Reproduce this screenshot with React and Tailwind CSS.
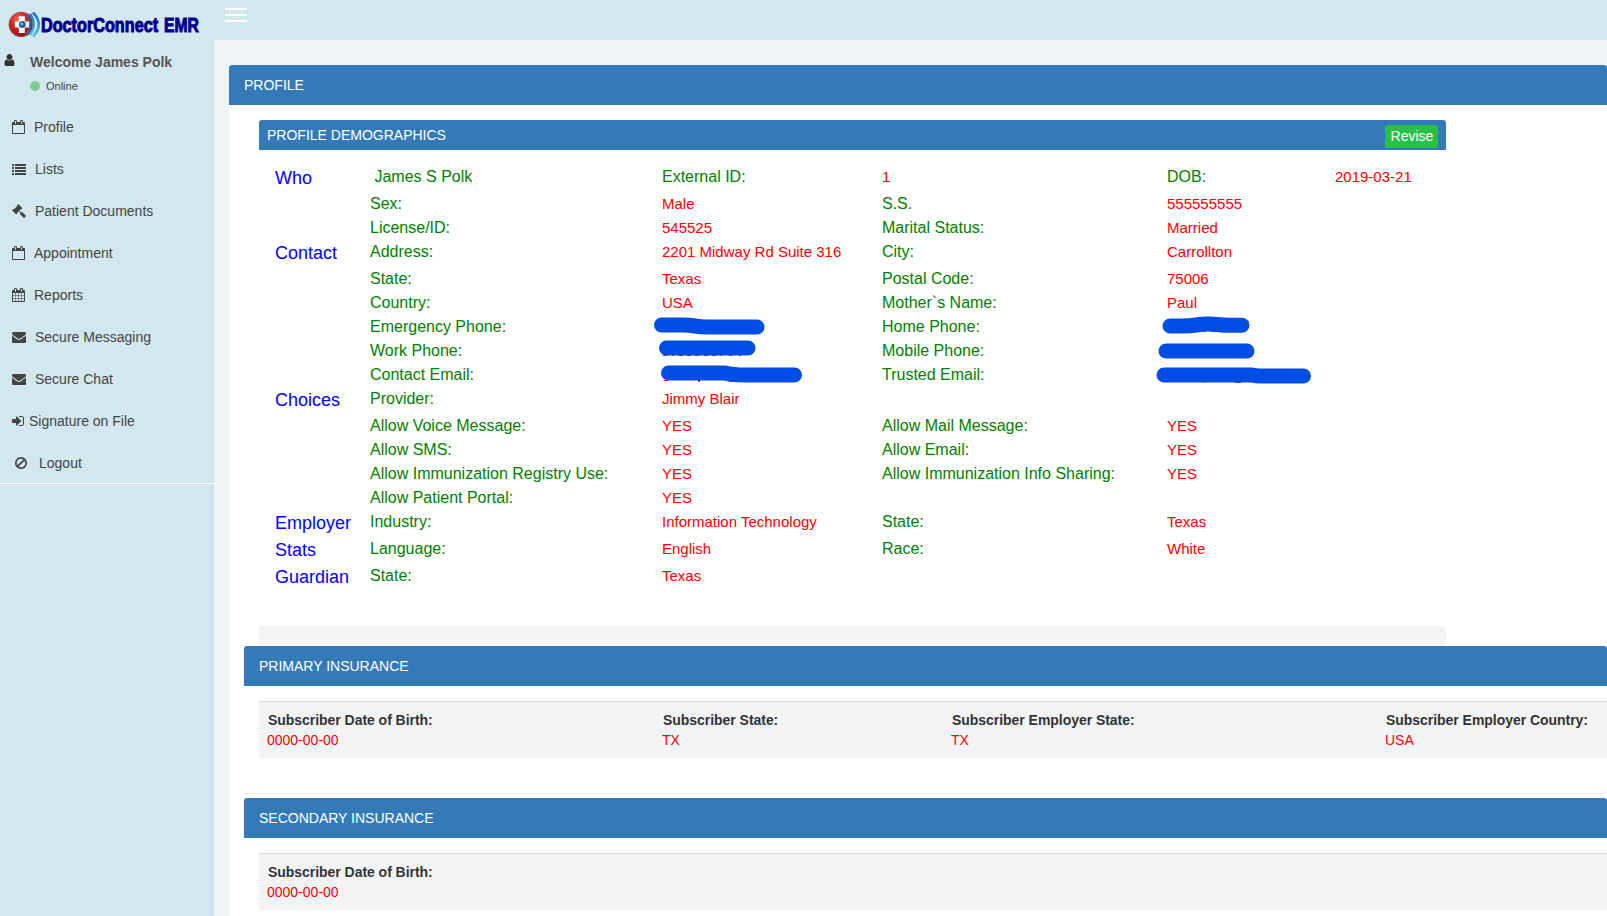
const P = {
  calendarO: "M192 1664h1408v-1024h-1408v1024zm384-1216v-288q0-14-9-23t-23-9h-64q-14 0-23 9t-9 23v288q0 14 9 23t23 9h64q14 0 23-9t9-23zm768 0v-288q0-14-9-23t-23-9h-64q-14 0-23 9t-9 23v288q0 14 9 23t23 9h64q14 0 23-9t9-23zm384-64v1280q0 52-38 90t-90 38h-1408q-52 0-90-38t-38-90v-1280q0-52 38-90t90-38h128v-96q0-66 47-113t113-47h64q66 0 113 47t47 113v96h384v-96q0-66 47-113t113-47h64q66 0 113 47t47 113v96h128q52 0 90 38t38 90z",
  calendar: "M192 1664h288v-288h-288v288zm352 0h320v-288h-320v288zm-352-352h288v-320h-288v320zm352 0h320v-320h-320v320zm-352-384h288v-288h-288v288zm736 736h320v-288h-320v288zm-384-736h320v-288h-320v288zm768 736h288v-288h-288v288zm-384-352h320v-320h-320v320zm-352-864v-288q0-13-9.5-22.5t-22.5-9.5h-64q-13 0-22.5 9.5t-9.5 22.5v288q0 13 9.5 22.5t22.5 9.5h64q13 0 22.5-9.5t9.5-22.5zm736 864h288v-320h-288v320zm-384-384h320v-288h-320v288zm384 0h288v-288h-288v288zm32-480v-288q0-13-9.5-22.5t-22.5-9.5h-64q-13 0-22.5 9.5t-9.5 22.5v288q0 13 9.5 22.5t22.5 9.5h64q13 0 22.5-9.5t9.5-22.5zm384-64v1280q0 52-38 90t-90 38h-1408q-52 0-90-38t-38-90v-1280q0-52 38-90t90-38h128v-96q0-66 47-113t113-47h64q66 0 113 47t47 113v96h384v-96q0-66 47-113t113-47h64q66 0 113 47t47 113v96h128q52 0 90 38t38 90z",
  list: "M0 256h256v256H0zM384 256h1408v256H384zM0 640h256v256H0zM384 640h1408v256H384zM0 1024h256v256H0zM384 1024h1408v256H384zM0 1408h256v256H0zM384 1408h1408v256H384z",
  gavel: "M1771 1536q0 53-37 90l-107 108q-39 37-91 37-53 0-90-37l-363-364q-38-36-38-90 0-53 43-96l-256-256-126 126q-14 14-34 14t-34-14q2 2 12.5 12t12.5 13 10 11.5 10 13.5 6 13.5 5.5 16.5 1.5 18q0 38-28 68-3 3-16.5 18t-19 20.5-18.5 16.5-22 15.5-22 9-26 4.5q-40 0-68-28l-408-408q-28-28-28-68 0-13 4.5-26t9-22 15.5-22 16.5-18.5 20.5-19 18-16.5q30-28 68-28 10 0 18 1.5t16.5 5.5 13.5 6 13.5 10 11.5 10 13 12.5 12 12.5q-14-14-14-34t14-34l348-348q14-14 34-14t34 14q-2-2-12.5-12t-12.5-13-10-11.5-10-13.5-6-13.5-5.5-16.5-1.5-18q0-38 28-68 3-3 16.5-18t19-20.5 18.5-16.5 22-15.5 22-9 26-4.5q40 0 68 28l408 408q28 28 28 68 0 13-4.5 26t-9 22-15.5 22-16.5 18.5-20.5 19-18 16.5q-30 28-68 28-10 0-18-1.5t-16.5-5.5-13.5-6-13.5-10-11.5-10-13-12.5-12-12.5q14 14 14 34t-14 34l-126 126 256 256q43-43 96-43 52 0 91 37l363 363q37 39 37 91z",
  envelope: "M1792 710v794q0 66-47 113t-113 47h-1472q-66 0-113-47t-47-113v-794q44 49 101 87 362 246 497 345 57 42 92.5 65.5t94.5 48 110 24.5h2q51 0 110-24.5t94.5-48 92.5-65.5q170-123 498-345 57-39 100-87zm0-294q0 79-49 151t-122 123q-376 261-468 325-10 7-42.5 31t-54 38.5-52 32.5-57.5 27-50 9h-2q-23 0-50-9t-57.5-27-52-32.5-54-38.5-42.5-31q-91-64-262-182.5t-205-142.5q-62-42-117-115.5t-55-136.5q0-78 41.5-130t118.5-52h1472q65 0 112.5 47t47.5 113z",
  signIn: "M1312 896q0 26-19 45l-544 544q-19 19-45 19t-45-19-19-45v-288h-448q-26 0-45-19t-19-45v-384q0-26 19-45t45-19h448v-288q0-26 19-45t45-19 45 19l544 544q19 19 19 45zm352-352v704q0 119-84.5 203.5t-203.5 84.5h-320q-13 0-22.5-9.5t-9.5-22.5q0-4-1-20t-.5-26.5 3-23.5 10-19.5 20.5-6.5h320q66 0 113-47t47-113v-704q0-66-47-113t-113-47h-312l-11.5-1-11.5-3-8-5.5-7-9-2-13.5q0-4-1-20t-.5-26.5 3-23.5 10-19.5 20.5-6.5h320q119 0 203.5 84.5t84.5 203.5z",
  ban: "M1440 893q0-161-87-295l-754 753q137 89 297 89 111 0 211.5-43.5t173.5-116.5 116-174.5 43-212.5zm-999 299l755-754q-135-91-300-91-148 0-273 73t-198 199-73 274q0 162 89 299zm1223-299q0 157-61 300t-163.5 246-245 164-298.5 61-298.5-61-245-164-163.5-246-61-300 61-299.5 163.5-245.5 245-164 298.5-61 298.5 61 245 164 163.5 245.5 61 299.5z",
  user: "M1536 1399q0 109-62.5 187t-150.5 78h-854q-88 0-150.5-78t-62.5-187q0-85 8.5-160.5t31.5-152 58.5-131 94-89 134.5-34.5q131 128 313 128t313-128q76 0 134.5 34.5t94 89 58.5 131 31.5 152 8.5 160.5zm-256-887q0 159-112.5 271.5t-271.5 112.5-271.5-112.5-112.5-271.5 112.5-271.5 271.5-112.5 271.5 112.5 112.5 271.5z",
};

function Icon({ name, x = 0, className = "size-[14px]" }) {
  return (
    <svg viewBox={`${x} 0 1792 1792`} className={`shrink-0 ${className}`} fill="currentColor">
      <path d={P[name]} />
    </svg>
  );
}

const MENU = [
  ["calendarO", 64, "Profile", "gap-[8px]"],
  ["list", 0, "Lists", "gap-[9px]"],
  ["gavel", 0, "Patient Documents", "gap-[9px]"],
  ["calendarO", 64, "Appointment", "gap-[8px]"],
  ["calendar", 64, "Reports", "gap-[8px]"],
  ["envelope", 0, "Secure Messaging", "gap-[9px]"],
  ["envelope", 0, "Secure Chat", "gap-[9px]"],
  ["signIn", 128, "Signature on File", "gap-[3px]"],
  ["ban", 128, "Logout", "gap-[10px] pl-[15px]"],
];

function Logo() {
  return (
    <svg className="block h-[40px] w-[214px] shrink-0 overflow-visible" viewBox="0 0 214 40">
      <defs>
        <radialGradient id="ball" cx="38%" cy="28%" r="75%">
          <stop offset="0" stopColor="#f4735f" />
          <stop offset="0.45" stopColor="#d8231f" />
          <stop offset="1" stopColor="#96100f" />
        </radialGradient>
        <linearGradient id="wave" x1="0" y1="0" x2="0" y2="1">
          <stop offset="0" stopColor="#1f74bd" />
          <stop offset="1" stopColor="#43c3f0" />
        </linearGradient>
      </defs>
      <circle cx="21.300" cy="24.500" r="12.700" fill="#8a6264" />
      <circle cx="21.300" cy="24.500" r="11.800" fill="url(#ball)" />
      <path d="M18.800 16.200h6v5.300h5v6h-5v5.500h-6v-5.500h-4v-6h4z" fill="#fff" />
      <path d="M26.500 14.500q7.500 9.500 0 20" fill="none" stroke="#1d6fb4" strokeWidth="1.800" />
      <circle cx="22.300" cy="24.500" r="3.500" fill="#1766ab" />
      <circle cx="21.700" cy="23.900" r="1.300" fill="#7fcaf3" />
      <path d="M30 14q7.500 10.500 0 21" fill="none" stroke="url(#wave)" strokeWidth="2.400" />
      <path d="M33 12.500q11.500 12 0 24" fill="none" stroke="url(#wave)" strokeWidth="2.600" />
      <g fontSize="19.500" className="font-bold" fill="#00008b" stroke="#00008b" strokeWidth="1">
        <text transform="translate(41 31.500) scale(0.832 1)">DoctorConnect</text>
        <text transform="translate(164 31.500) scale(0.805 1)">EMR</text>
      </g>
    </svg>
  );
}

const ROWS = [
  ["Who", "\u00a0James S Polk", "External ID:", "1", "DOB:", "2019-03-21"],
  ["", "Sex:", "Male", "S.S.", "555555555"],
  ["", "License/ID:", "545525", "Marital Status:", "Married"],
  ["Contact", "Address:", "2201 Midway Rd Suite 316", "City:", "Carrollton"],
  ["", "State:", "Texas", "Postal Code:", "75006"],
  ["", "Country:", "USA", "Mother`s Name:", "Paul"],
  ["", "Emergency Phone:", "", "Home Phone:", ""],
  ["", "Work Phone:", "", "Mobile Phone:", ""],
  ["", "Contact Email:", "", "Trusted Email:", ""],
  ["Choices", "Provider:", "Jimmy Blair"],
  ["", "Allow Voice Message:", "YES", "Allow Mail Message:", "YES"],
  ["", "Allow SMS:", "YES", "Allow Email:", "YES"],
  ["", "Allow Immunization Registry Use:", "YES", "Allow Immunization Info Sharing:", "YES"],
  ["", "Allow Patient Portal:", "YES"],
  ["Employer", "Industry:", "Information Technology", "State:", "Texas"],
  ["Stats", "Language:", "English", "Race:", "White"],
  ["Guardian", "State:", "Texas"],
];

function Row({ cells, first }) {
  const [head, ...rest] = cells;
  return (
    <div className={`grid grid-cols-[95px_292px_220px_285px_168px_100px] items-start leading-[24px] whitespace-nowrap ${head ? "h-[27px]" : "h-[24px]"}`}>
      <span className="text-[18px] leading-[27px] text-[#0000ff]">{head}</span>
      {rest.map((c, i) => {
        const label = first ? i === 0 || i === 1 || i === 3 : i % 2 === 0;
        return (
          <span key={i} className={label ? "text-[16px] text-[#008000]" : "text-[15px] text-[#ff0000]"}>
            {c}
          </span>
        );
      })}
    </div>
  );
}

function Redactions() {
  return (
    <svg className="pointer-events-none absolute top-[164px] left-0 h-[120px] w-[700px]" viewBox="650 310 700 120" fill="none">
      <g fill="#e8103a">
        <path d="M663 355h4v1h-4zM672 355h2v1h-2zM679 355h4v1h-4zM687 355h4v1h-4zM695 355h4v1h-4zM704 355h4v1h-4zM712 355h4v1h-4zM720 355h2v1h-2zM729 355h3v1h-3zM739 355h2v1h-2z" />
        <path d="M664 380h4v1h-4zM698 380h2v2h-2zM729 381h8v1h-8z" />
        <path d="M1194 331h4v1h-4zM1203 331h3v1h-3zM1211 331h4v1h-4zM1247 321h2v1h-2z" />
        <path d="M1204 382h1v1h-1zM1235 382h6v1h-6z" />
      </g>
      <g stroke="#004de6" strokeWidth="15" strokeLinecap="round" strokeLinejoin="round">
        <path d="M661.500 325H683q6 0 12 1t12 1h50" />
        <path d="M666.500 348h81.500" />
        <path d="M668.500 373H725q8 2 20 2h49.500" />
        <path d="M1170 326h12q8 0 14-1t12-1q6 0 12 .7t10 .5h12" />
        <path d="M1166 351h81" />
        <path d="M1164 375h88q4 1 8 1h43.500" />
      </g>
    </svg>
  );
}

function PanelTitle({ children }) {
  return (
    <div className="h-[40px] rounded-t-[3px] bg-[#337ab7] px-[15px] pt-[10px] text-[14px] leading-[20px] text-white">{children}</div>
  );
}

function Insurance({ title, fields }) {
  return (
    <section className="mb-[4px] h-[148px] rounded-[4px] border-b border-[#eeeeee] bg-white">
      <PanelTitle>{title}</PanelTitle>
      <div className="mt-[15px] ml-[15px] grid h-[57px] grid-cols-[395px_289px_434px_300px] border-t border-[#dddddd] bg-[#f2f3f5] px-[8px] pt-[8px] text-[14px] leading-[20px] whitespace-nowrap">
        {fields.map(([k, v]) => (
          <div key={k}>
            <div className="pl-[1px] font-bold tracking-[-0.04px] text-[#333333]">{k}</div>
            <div className="text-[#ff0000]">{v}</div>
          </div>
        ))}
      </div>
    </section>
  );
}

export default function App() {
  return (
    <div className="flex h-[916px] w-[1607px] overflow-hidden bg-[#eef3f5] font-['Liberation_Sans',Arial,sans-serif] text-[#444444]">
      <aside className="flex w-[214px] shrink-0 flex-col bg-[#d3e7ef]">
        <Logo />
        <div className="flex h-[66px] pt-[12px] pl-[2px]">
          <Icon name="user" className="mt-px h-[14px] w-[15px] text-[#333333]" />
          <div className="ml-[13px]">
            <div className="text-[14px] leading-[20px] font-bold text-[#555555]">Welcome James Polk</div>
            <div className="mt-[6px] flex items-center gap-[6px] text-[11px] leading-[16px]">
              <i className="size-[10px] rounded-full bg-[#7fcc91]" />
              Online
            </div>
          </div>
        </div>
        <nav className="flex h-[378px] flex-col border-b border-white">
          {MENU.map(([icon, x, label, cls]) => (
            <a key={label} className={`flex h-[42px] shrink-0 items-center pl-[12px] text-[14px] leading-[20px] ${cls}`}>
              <Icon name={icon} x={x} />
              {label}
            </a>
          ))}
        </nav>
        <div className="grow bg-linear-to-l from-[#cbdfe8] to-[#d3e7ef] to-[3%]" />
      </aside>

      <main className="flex min-w-0 grow flex-col">
        <header className="h-[40px] shrink-0 bg-[#d3e7ef] pt-[8px] pl-[11px]">
          <div className="flex w-[22px] flex-col gap-[4px]">
            <i className="h-[2px] bg-white" />
            <i className="h-[2px] bg-white" />
            <i className="h-[2px] bg-white" />
          </div>
        </header>

        <section className="mt-[25px] ml-[15px] grow rounded-tl-[3px] bg-white">
          <PanelTitle>PROFILE</PanelTitle>
          <div className="relative mt-[15px] ml-[30px] h-[526px] w-[1187px]">
            <div className="flex h-[30px] justify-between rounded-t-[3px] bg-[#337ab7] px-[8px] pt-[5px] text-[14px] leading-[20px] text-white">
              <span>PROFILE DEMOGRAPHICS</span>
              <button className="h-[23px] w-[53px] rounded-[3px] bg-[#28c04a] pb-[1px] pl-[1px] leading-[22px]">Revise</button>
            </div>
            <div className="h-[476px] pt-[15px] pl-[16px]">
              {ROWS.map((cells, i) => (
                <Row key={i} cells={cells} first={i === 0} />
              ))}
            </div>
            <div className="h-[20px] bg-[#f4f4f4]" />
            <div className="absolute top-[26px] left-[391px]">
              <Redactions />
            </div>
          </div>
          <div className="ml-[15px]">
            <Insurance
              title="PRIMARY INSURANCE"
              fields={[
                ["Subscriber Date of Birth:", "0000-00-00"],
                ["Subscriber State:", "TX"],
                ["Subscriber Employer State:", "TX"],
                ["Subscriber Employer Country:", "USA"],
              ]}
            />
            <Insurance title="SECONDARY INSURANCE" fields={[["Subscriber Date of Birth:", "0000-00-00"]]} />
          </div>
        </section>
      </main>
    </div>
  );
}
